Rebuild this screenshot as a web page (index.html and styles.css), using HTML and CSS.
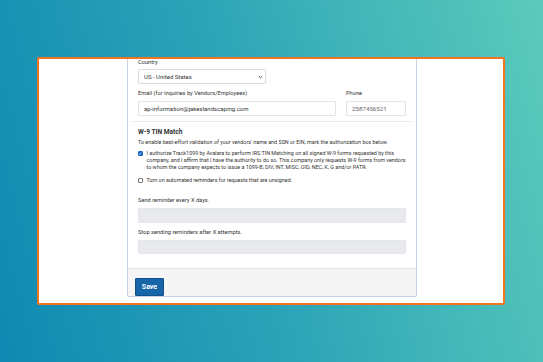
FILE: index.html
```html
<!DOCTYPE html>
<html lang="en">
<head>
    <meta charset="UTF-8">
    <meta name="viewport" content="width=device-width, initial-scale=1.0">
    <title>Company Settings</title>
    <link rel="stylesheet" href="styles.css">
</head>
<body>
    <div class="frame">
        <div class="panel">
            <div class="panel-body">
                <div class="field">
                    <label class="label">Country</label>
                    <div class="select">
                        <span>US - United States</span>
                        <svg class="chevron" width="5" height="4" viewBox="0 0 5 4"><path d="M0.8 1.2 L2.5 2.8 L4.2 1.2" fill="none" stroke="#333" stroke-width="0.9"/></svg>
                    </div>
                </div>
                <div class="row">
                    <div class="field email">
                        <label class="label">Email (for inquiries by Vendors/Employees)</label>
                        <input class="input" type="text" value="ap-information@jakeslandscaping.com">
                    </div>
                    <div class="field phone">
                        <label class="label">Phone</label>
                        <input class="input muted" type="text" value="2587456521">
                    </div>
                </div>
            </div>

            <hr class="divider">

            <div class="panel-body tin">
                <h3>W-9 TIN Match</h3>
                <p class="note">To enable best-effort validation of your vendors' name and SSN or EIN, mark the authorization box below.</p>

                <div class="check">
                    <span class="box checked">
                        <svg width="5" height="5" viewBox="0 0 5 5"><path d="M1.1 2.6 L2.1 3.5 L3.9 1.4" fill="none" stroke="#fff" stroke-width="0.8"/></svg>
                    </span>
                    <span>I authorize Track1099 by Avalara to perform IRS TIN Matching on all signed W-9 forms requested by this company, and I affirm that I have the authority to do so. This company only requests W-9 forms from vendors to whom the company expects to issue a 1099-B, DIV, INT, MISC, OID, NEC, K, G and/or PATR.</span>
                </div>

                <div class="check second">
                    <span class="box"></span>
                    <span>Turn on automated reminders for requests that are unsigned.</span>
                </div>

                <div class="field reminder">
                    <label class="label">Send reminder every X days.</label>
                    <input class="input disabled" type="text" disabled>
                </div>
                <div class="field reminder">
                    <label class="label">Stop sending reminders after X attempts.</label>
                    <input class="input disabled" type="text" disabled>
                </div>
            </div>

            <div class="panel-footer">
                <button class="btn-save" type="button">Save</button>
            </div>
        </div>
    </div>
</body>
</html>
```

FILE: styles.css
```css
html, body {
    height: 100%;
}
body {
    margin: 0;
    padding: 57px 0 0 37px;
    box-sizing: border-box;
    font-family: Roboto, "Liberation Sans", sans-serif;
    color: #333;
    background: linear-gradient(75deg, #0f89b2 0%, #2ba3b7 45%, #5ccbbb 100%);
    overflow: hidden;
}
.frame {
    width: 468px;
    height: 248px;
    box-sizing: border-box;
    border: 2px solid #f47321;
    border-radius: 2px;
    background-color: #fff;
    padding-left: 88px;
}
.panel {
    width: 290px;
    box-sizing: border-box;
    border: 1px solid #c6d4e1;
    border-top: none;
    border-radius: 0 0 2px 2px;
}
.panel-body {
    padding: 0 10px;
}
.label {
    display: block;
    font-size: 5.7px;
    line-height: 7px;
    color: #333;
}
.field {
    display: flex;
    flex-direction: column;
}
.select {
    width: 128px;
    height: 15px;
    margin-top: 3px;
    box-sizing: border-box;
    border: 1px solid #d9dde2;
    border-radius: 1px;
    display: flex;
    align-items: center;
    justify-content: space-between;
    padding: 0 2px 0 5px;
    font-size: 6px;
}
.row {
    display: flex;
    gap: 10px;
    margin-top: 6px;
}
.email {
    width: 198px;
}
.phone {
    flex: 1;
}
.input {
    height: 15px;
    margin: 4px 0 0;
    box-sizing: border-box;
    border: 1px solid #e1e4e8;
    border-radius: 1px;
    padding: 0 5px;
    font-family: inherit;
    font-size: 6px;
    color: #333;
    background-color: #fff;
    width: 100%;
}
.input.muted {
    color: #666;
    font-size: 6.2px;
}
.divider {
    border: none;
    border-top: 1px solid #e6e8eb;
    margin: 5px 5px 0;
}
.tin h3 {
    margin: 6px 0 0;
    font-size: 6.6px;
    line-height: 8px;
    font-weight: bold;
    color: #333;
}
.note {
    margin: 3px 0 0;
    font-size: 5.4px;
    line-height: 7px;
}
.check {
    display: flex;
    gap: 3.5px;
    margin-top: 3.5px;
    font-size: 5.4px;
    line-height: 7px;
}
.check.second {
    margin-top: 6.5px;
}
.box {
    flex: none;
    width: 5px;
    height: 5px;
    margin-top: 1px;
    box-sizing: border-box;
    border: 0.6px solid #767676;
    border-radius: 1px;
    background-color: #fff;
    display: flex;
}
.box.checked {
    background-color: #1766c0;
    border-color: #1766c0;
}
.box.checked svg {
    margin: -0.6px;
}
.reminder {
    margin-top: 13px;
}
.reminder + .reminder {
    margin-top: 6px;
}
.input.disabled {
    height: 14.5px;
    background-color: #e9eaee;
    border-color: #e4e6ea;
}
.panel-footer {
    margin-top: 13.5px;
    border-top: 1px solid #e2e4e7;
    background-color: #f5f5f5;
    padding: 5px 7px 5px;
    height: 28px;
    box-sizing: border-box;
}
.btn-save {
    width: 29px;
    height: 18px;
    padding: 0;
    border: 1px solid #0f4f8c;
    border-radius: 1px;
    background-color: #1665a9;
    color: #fff;
    font-family: inherit;
    font-size: 7px;
    font-weight: bold;
}
```
